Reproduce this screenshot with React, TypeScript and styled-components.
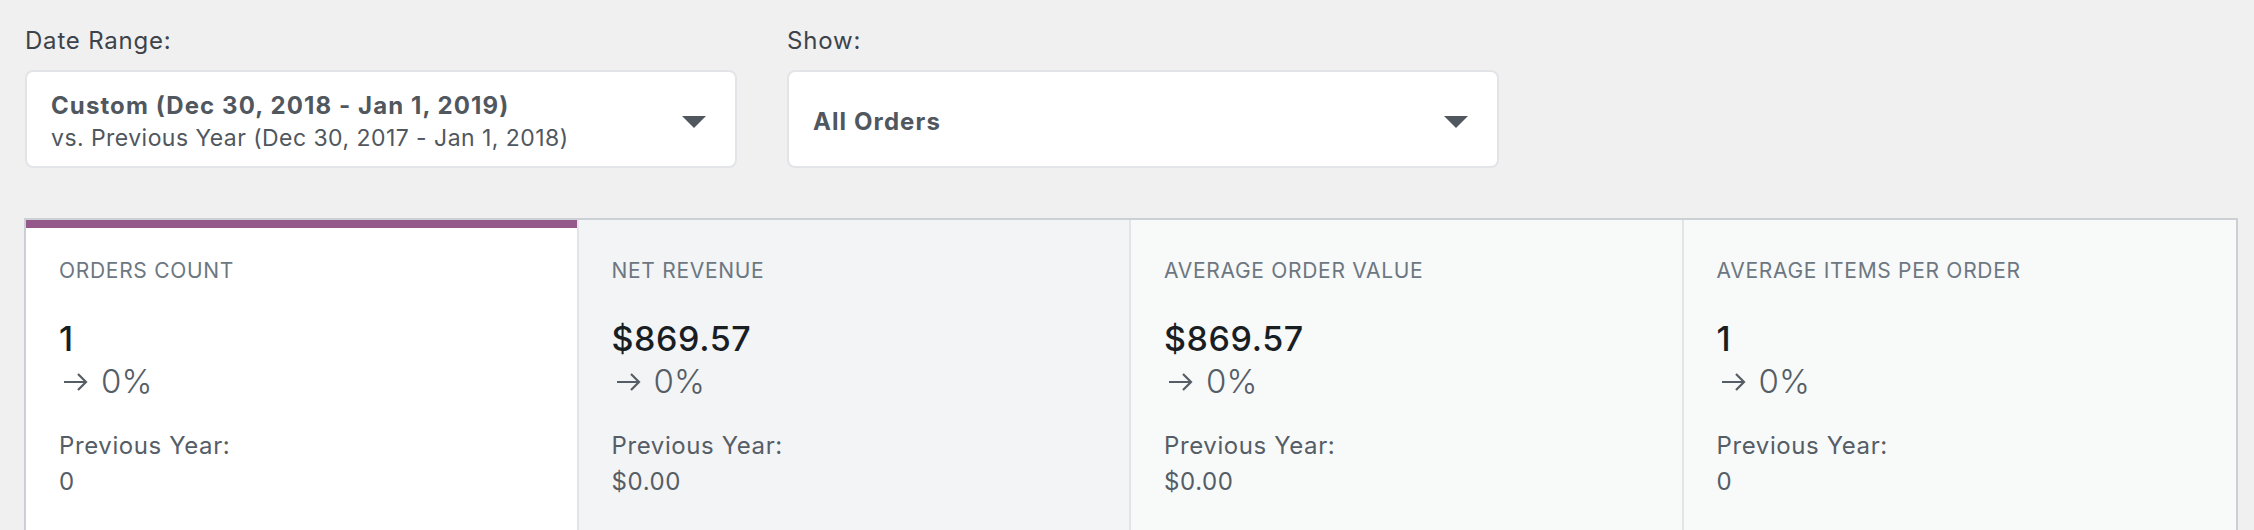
import styled, { createGlobalStyle } from "styled-components";

const GlobalStyle = createGlobalStyle`
    body {
        margin: 0;
        background-color: #f0f0f1;
        font-family: Inter, "Noto Sans", sans-serif;
    }
`;

const Page = styled.div`
    padding: 27px 16px 0 24px;
`;

const Filters = styled.div`
    display: flex;
    gap: 50px;
    margin-left: 1px;
`;

const Filter = styled.div`
    display: flex;
    flex-direction: column;
    width: 712px;
`;

const FilterLabel = styled.div`
    font-size: 24px;
    line-height: 28px;
    letter-spacing: 0.8px;
    color: #3c434a;
    margin-bottom: 15px;
`;

const Dropdown = styled.div`
    box-sizing: border-box;
    height: 98px;
    display: flex;
    align-items: center;
    justify-content: space-between;
    padding: 5px 29px 0 24px;
    background-color: white;
    border: 2px solid #e2e4e7;
    border-radius: 8px;
`;

const DropdownText = styled.div`
    display: flex;
    flex-direction: column;
    color: #50575e;
`;

const DropdownMain = styled.div`
    font-size: 24px;
    line-height: 32px;
    font-weight: 700;
    letter-spacing: 1.1px;
`;

const DropdownSub = styled.div`
    font-size: 23px;
    line-height: 32px;
    letter-spacing: 0.45px;
`;

const Caret = styled.svg`
    width: 24px;
    height: 12px;
    fill: #50575e;
`;

const Summary = styled.div`
    display: grid;
    grid-template-columns: repeat(4, 1fr);
    margin-top: 50px;
    border: 2px solid #ccd0d4;
    border-bottom: none;
`;

const Card = styled.div<{ $bg: string; $selected?: boolean; $last?: boolean }>`
    display: flex;
    flex-direction: column;
    padding: 38px 33px 34px 33px;
    background-color: ${(p) => p.$bg};
    border-right: ${(p) => (p.$last ? "none" : "2px solid #e2e4e7")};
    box-shadow: ${(p) => (p.$selected ? "inset 0 8px 0 #95588a" : "none")};
`;

const CardLabel = styled.div`
    font-size: 21px;
    line-height: 26px;
    letter-spacing: 0.7px;
    color: #6c7781;
    text-transform: uppercase;
    margin-bottom: 33px;
`;

const CardValue = styled.div`
    font-size: 34px;
    line-height: 43px;
    font-weight: 500;
    letter-spacing: 0.6px;
    color: #191e23;
`;

const Delta = styled.div`
    display: flex;
    align-items: center;
    gap: 12px;
    font-size: 33px;
    line-height: 43px;
    font-weight: 300;
    color: #555d66;
    margin-bottom: 25px;
`;

const Arrow = styled.svg`
    width: 26px;
    height: 20px;
    margin-left: 4px;
    stroke: #555d66;
    stroke-width: 2.2;
    fill: none;
`;

const PrevText = styled.div`
    font-size: 24px;
    line-height: 36px;
    letter-spacing: 0.6px;
    color: #555d66;
`;

const cards = [
    { label: "Orders Count", value: "1", prev: "0", bg: "#ffffff", selected: true },
    { label: "Net Revenue", value: "$869.57", prev: "$0.00", bg: "#f3f4f5" },
    { label: "Average Order Value", value: "$869.57", prev: "$0.00", bg: "#f8f9f9" },
    { label: "Average Items Per Order", value: "1", prev: "0", bg: "#f8f9f9" },
];

function CaretDown() {
    return (
        <Caret viewBox="0 0 24 12">
            <path d="M0 0h24L12 12z" />
        </Caret>
    );
}

export default function App() {
    return (
        <Page>
            <GlobalStyle />
            <Filters>
                <Filter>
                    <FilterLabel>Date Range:</FilterLabel>
                    <Dropdown>
                        <DropdownText>
                            <DropdownMain>Custom (Dec 30, 2018 - Jan 1, 2019)</DropdownMain>
                            <DropdownSub>vs. Previous Year (Dec 30, 2017 - Jan 1, 2018)</DropdownSub>
                        </DropdownText>
                        <CaretDown />
                    </Dropdown>
                </Filter>
                <Filter>
                    <FilterLabel>Show:</FilterLabel>
                    <Dropdown>
                        <DropdownText>
                            <DropdownMain>All Orders</DropdownMain>
                        </DropdownText>
                        <CaretDown />
                    </Dropdown>
                </Filter>
            </Filters>

            <Summary>
                {cards.map((c, i) => (
                    <Card key={c.label} $bg={c.bg} $selected={c.selected} $last={i === cards.length - 1}>
                        <CardLabel>{c.label}</CardLabel>
                        <CardValue>{c.value}</CardValue>
                        <Delta>
                            <Arrow viewBox="0 0 26 20">
                                <path d="M1 10h22M15 2l8 8-8 8" />
                            </Arrow>
                            <span>0%</span>
                        </Delta>
                        <PrevText>Previous Year:</PrevText>
                        <PrevText>{c.prev}</PrevText>
                    </Card>
                ))}
            </Summary>
        </Page>
    );
}
